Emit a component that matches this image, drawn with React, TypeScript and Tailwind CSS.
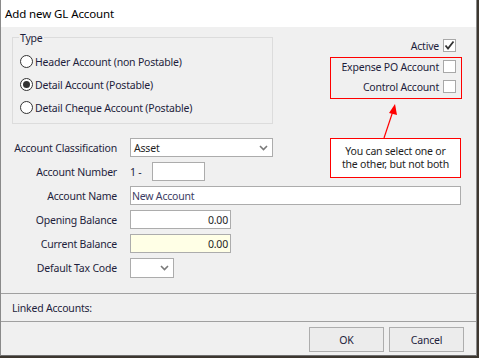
import React from 'react';

function Chevron() {
  return (
    <svg width="9" height="6" viewBox="0 0 9 6" className="shrink-0">
      <path d="M1 1 L4.5 4.5 L8 1" fill="none" stroke="#7a7a7a" strokeWidth="1.6" />
    </svg>
  );
}

function Radio({ checked, label }: { checked?: boolean; label: string }) {
  return (
    <div className="h-[23px] flex items-center gap-[2px]">
      <div className="w-[13px] h-[13px] rounded-full border border-[#333333] bg-white flex items-center justify-center">
        {checked && <div className="w-[7px] h-[7px] rounded-full bg-[#333333]" />}
      </div>
      <span>{label}</span>
    </div>
  );
}

function CheckBox({ checked }: { checked?: boolean }) {
  return (
    <div className="w-[13px] h-[13px] border border-[#a8a8a8] bg-white flex items-center justify-center">
      {checked && (
        <svg width="11" height="11" viewBox="0 0 11 11">
          <path d="M1.5 5.5 L4 8.5 L9.5 1.5" fill="none" stroke="#333333" strokeWidth="1.8" />
        </svg>
      )}
    </div>
  );
}

export default function App() {
  return (
    <div className="w-[479px] h-[358px] bg-[#3d3730] overflow-hidden font-['Noto_Sans',sans-serif] text-[10.5px] tracking-[-0.2px] leading-[14px] text-[#1e1e3c]">
      <div className="w-[477px] h-[356px] relative flex flex-col bg-[#f0f0f0] border-x border-b border-x-[#8a8a8a] border-b-[#6e6e6e]">
        {/* Title */}
        <div className="h-[27px] shrink-0 bg-white pl-[4px] flex items-center text-[11.5px] tracking-[-0.1px] text-black">
          Add new GL Account
        </div>

        {/* Type + flags */}
        <div className="flex pl-[11px] pt-[10px]">
          <div className="w-[261px] h-[87px] border border-[#dcdcdc] pl-[7px]">
            <div className="-mt-[7px] -ml-[1px] px-[1px] w-fit bg-[#f0f0f0] text-[#1e1e3c]">Type</div>
            <div className="mt-[5px] flex flex-col">
              <Radio label="Header Account (non Postable)" />
              <Radio checked label="Detail Account (Postable)" />
              <Radio label="Detail Cheque Account (Postable)" />
            </div>
          </div>

          <div className="ml-auto mr-[14px] w-[132px] flex flex-col">
            <div className="mt-[2px] h-[13px] flex items-center justify-end gap-[4px] pr-[6px]">
              <span>Active</span>
              <CheckBox checked />
            </div>
            <div className="mt-[5px] h-[42px] border border-[#ff0000] pt-[2px] pr-[5px] flex flex-col gap-[7px]">
              <div className="h-[13px] flex items-center justify-end gap-[4px]">
                <span>Expense PO Account</span>
                <CheckBox />
              </div>
              <div className="h-[13px] flex items-center justify-end gap-[4px]">
                <span>Control Account</span>
                <CheckBox />
              </div>
            </div>
          </div>
        </div>

        {/* Form */}
        <div className="mt-[14px] pl-[11px] grid grid-cols-[105px_1fr] gap-x-[13px] gap-y-[5px] auto-rows-[19px] items-center">
          <div className="text-right whitespace-nowrap">Account Classification</div>
          <div className="w-[143px] h-[19px] border border-[#acacac] bg-white flex items-center justify-between pl-[3px] pr-[4px]">
            <span className="text-[#1e1e1e]">Asset</span>
            <Chevron />
          </div>

          <div className="text-right">Account Number</div>
          <div className="flex items-center">
            <span className="w-[22px]">1 -</span>
            <div className="w-[53px] h-[19px] border border-[#acacac] bg-white" />
          </div>

          <div className="text-right">Account Name</div>
          <div className="w-[331px] h-[19px] border border-[#acacac] bg-white flex items-center pl-[1px] text-[#3c3c64]">
            New Account
          </div>

          <div className="text-right">Opening Balance</div>
          <div className="w-[101px] h-[19px] border border-[#acacac] bg-white flex items-center justify-end pr-[2px] text-[#1e1e1e]">
            0.00
          </div>

          <div className="text-right">Current Balance</div>
          <div className="w-[101px] h-[19px] border border-[#acacac] bg-[#ffffe6] flex items-center justify-end pr-[2px] text-[#1e1e1e]">
            0.00
          </div>

          <div className="text-right">Default Tax Code</div>
          <div className="w-[44px] h-[20px] border border-[#acacac] bg-white flex items-center justify-end pr-[4px]">
            <Chevron />
          </div>
        </div>

        {/* Bottom */}
        <div className="mt-auto border-t border-[#a0a0a0] h-[28px] pl-[11px] flex items-center">
          Linked Accounts:
        </div>
        <div className="border-t border-[#a0a0a0] h-[34px] pt-[5px] pr-[12px] flex justify-end gap-[5px]">
          <button className="w-[75px] h-[25px] border border-[#adadad] bg-[#ececec] text-[#1e1e3c]">OK</button>
          <button className="w-[75px] h-[25px] border border-[#adadad] bg-[#ececec] text-[#1e1e3c]">Cancel</button>
        </div>

        {/* Annotation */}
        <svg className="absolute left-[370px] top-[100px]" width="40" height="42" viewBox="0 0 40 42">
          <path d="M13 38 L23 8" stroke="#ff0000" strokeWidth="1.2" fill="none" />
          <path d="M24 4 L18 13 L26 15 Z" fill="#ff0000" />
        </svg>
        <div className="absolute left-[329px] top-[138px] w-[131px] h-[40px] border border-[#ff0000] bg-white flex flex-col items-center justify-center leading-[13px] text-[#1e1e1e]">
          <span>You can select one or</span>
          <span>the other, but not both</span>
        </div>
      </div>
    </div>
  );
}
